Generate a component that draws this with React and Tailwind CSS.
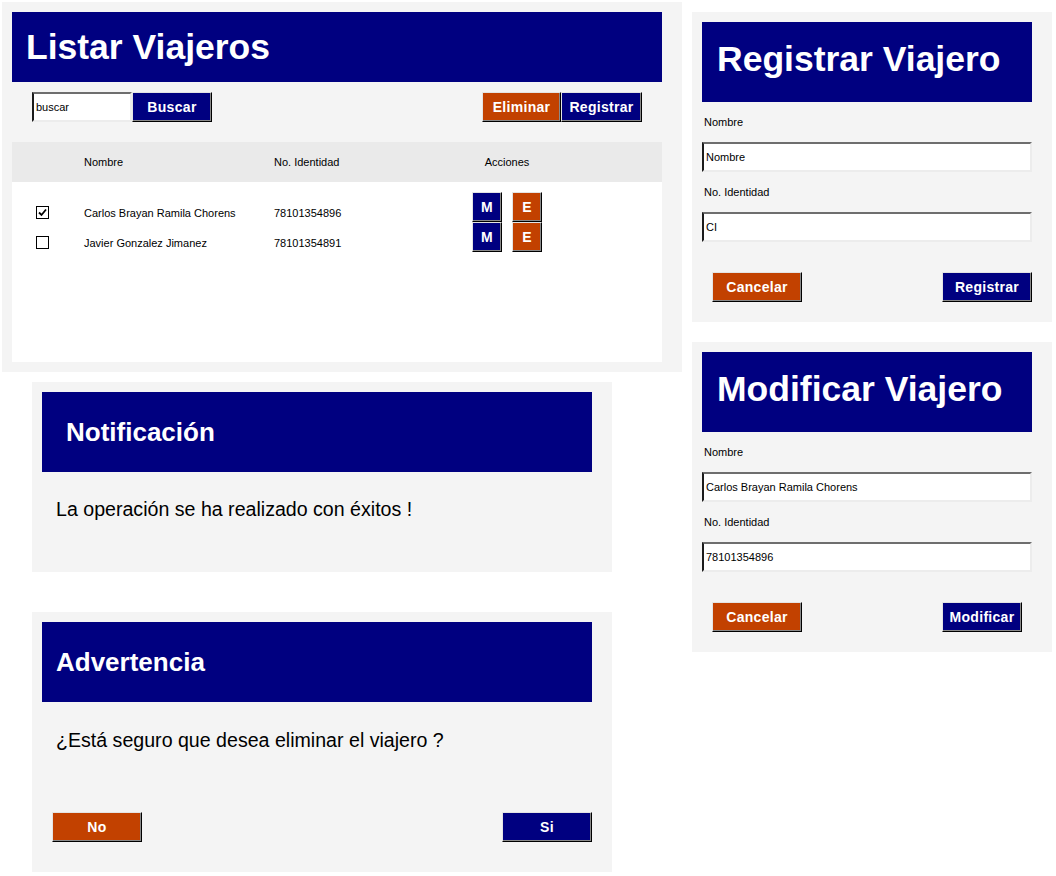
import React from "react";

const raised =
  "border border-t-[#e4e4e4] border-l-[#e4e4e4] border-r-black border-b-black shadow-[inset_-1px_-1px_#8a8a8a] text-white font-bold text-[14px] tracking-[0.3px] flex items-center justify-center";
const navyBtn = `bg-[#000080] ${raised}`;
const orangeBtn = `bg-[#c24100] ${raised}`;
const sunken =
  "bg-white border-2 border-t-[#6e6e6e] border-l-[#1c1c1c] border-r-[#ececec] border-b-[#ececec] text-[11px] text-black flex items-center pl-[2px]";

const viajeros = [
  { nombre: "Carlos Brayan Ramila Chorens", ci: "78101354896", checked: true },
  { nombre: "Javier Gonzalez Jimanez", ci: "78101354891", checked: false },
];

function Check({ checked }) {
  return (
    <div className="w-[13px] h-[13px] border border-black bg-white flex items-center justify-center">
      {checked && (
        <svg width="9" height="9" viewBox="0 0 9 9">
          <path d="M1 4.5 L3.5 7 L8 1.5" fill="none" stroke="black" strokeWidth="1.8" />
        </svg>
      )}
    </div>
  );
}

function FormPanel({ title, nombre, ci, action, actionW }) {
  return (
    <div className="bg-[#f4f4f4] pt-[10px] pl-[10px] pr-[20px] pb-[20px] w-[360px]">
      <div className="h-[80px] bg-[#000080] flex items-center pl-[15px]">
        <h1 className="text-white font-bold text-[35.5px] leading-none pb-[4px]">{title}</h1>
      </div>
      <div className="h-[40px] flex items-center pl-[2px] text-[11px]">Nombre</div>
      <div className={`h-[30px] ${sunken}`}>{nombre}</div>
      <div className="h-[40px] flex items-center pl-[2px] text-[11px]">No. Identidad</div>
      <div className={`h-[30px] ${sunken}`}>{ci}</div>
      <div className="mt-[30px] flex justify-between pl-[10px]">
        <button className={`${orangeBtn} w-[90px] h-[30px]`}>Cancelar</button>
        <button className={`${navyBtn} ${actionW} h-[30px]`}>{action}</button>
      </div>
    </div>
  );
}

export default function App() {
  return (
    <div className="min-h-screen bg-white flex items-start pl-[2px] pt-[2px] font-['Liberation_Sans',Arial,sans-serif] text-black">
      {/* left column */}
      <div className="w-[680px] flex flex-col">
        {/* Listar Viajeros */}
        <div className="bg-[#f4f4f4] pt-[10px] pl-[10px] pr-[20px] pb-[10px]">
          <div className="h-[70px] bg-[#000080] flex items-center pl-[14px]">
            <h1 className="text-white font-bold text-[35.5px] leading-none pt-[2px]">Listar Viajeros</h1>
          </div>
          <div className="mt-[10px] h-[30px] flex justify-between px-[20px]">
            <div className="flex">
              <div className={`w-[100px] h-[30px] ${sunken}`}>buscar</div>
              <button className={`${navyBtn} w-[80px] h-[30px]`}>Buscar</button>
            </div>
            <div className="flex">
              <button className={`${orangeBtn} w-[79px] h-[30px]`}>Eliminar</button>
              <button className={`${navyBtn} w-[81px] h-[30px]`}>Registrar</button>
            </div>
          </div>
          <div className="mt-[20px] h-[40px] bg-[#eaeaea] grid grid-cols-[72px_190px_198px_70px] items-center text-[11px]">
            <div />
            <div>Nombre</div>
            <div>No. Identidad</div>
            <div className="text-center">Acciones</div>
          </div>
          <div className="h-[180px] bg-white pt-[10px]">
            {viajeros.map((v) => (
              <div key={v.ci} className="h-[30px] grid grid-cols-[72px_190px_198px_70px] items-start text-[11px]">
                <div className="pl-[24px] pt-[14px]">
                  <Check checked={v.checked} />
                </div>
                <div className="pt-[15px] leading-[13px]">{v.nombre}</div>
                <div className="pt-[15px] leading-[13px]">{v.ci}</div>
                <div className="flex gap-[10px]">
                  <button className={`${navyBtn} w-[30px] h-[30px]`}>M</button>
                  <button className={`${orangeBtn} w-[30px] h-[30px]`}>E</button>
                </div>
              </div>
            ))}
          </div>
        </div>

        {/* Notificación */}
        <div className="ml-[30px] mt-[10px] w-[580px] h-[190px] bg-[#f4f4f4] pt-[10px] pl-[10px] pr-[20px]">
          <div className="h-[80px] bg-[#000080] flex items-center pl-[24px]">
            <h2 className="text-white font-bold text-[26px] leading-none">Notificación</h2>
          </div>
          <p className="mt-[26px] pl-[14px] text-[19.6px] leading-[22px]">La operación se ha realizado con éxitos !</p>
        </div>

        {/* Advertencia */}
        <div className="ml-[30px] mt-[40px] w-[580px] bg-[#f4f4f4] pt-[10px] pl-[10px] pr-[20px] pb-[30px]">
          <div className="h-[80px] bg-[#000080] flex items-center pl-[14px]">
            <h2 className="text-white font-bold text-[26px] leading-none">Advertencia</h2>
          </div>
          <p className="mt-[27px] pl-[14px] text-[19.6px] leading-[22px]">¿Está seguro que desea eliminar el viajero ?</p>
          <div className="mt-[61px] flex justify-between pl-[10px]">
            <button className={`${orangeBtn} w-[90px] h-[30px]`}>No</button>
            <button className={`${navyBtn} w-[90px] h-[30px]`}>Si</button>
          </div>
        </div>
      </div>

      {/* right column */}
      <div className="ml-[10px] mt-[10px] flex flex-col gap-[20px]">
        <FormPanel title="Registrar Viajero" nombre="Nombre" ci="CI" action="Registrar" actionW="w-[90px]" />
        <FormPanel
          title="Modificar Viajero"
          nombre="Carlos Brayan Ramila Chorens"
          ci="78101354896"
          action="Modificar"
          actionW="w-[80px] mr-[10px]"
        />
      </div>
    </div>
  );
}
